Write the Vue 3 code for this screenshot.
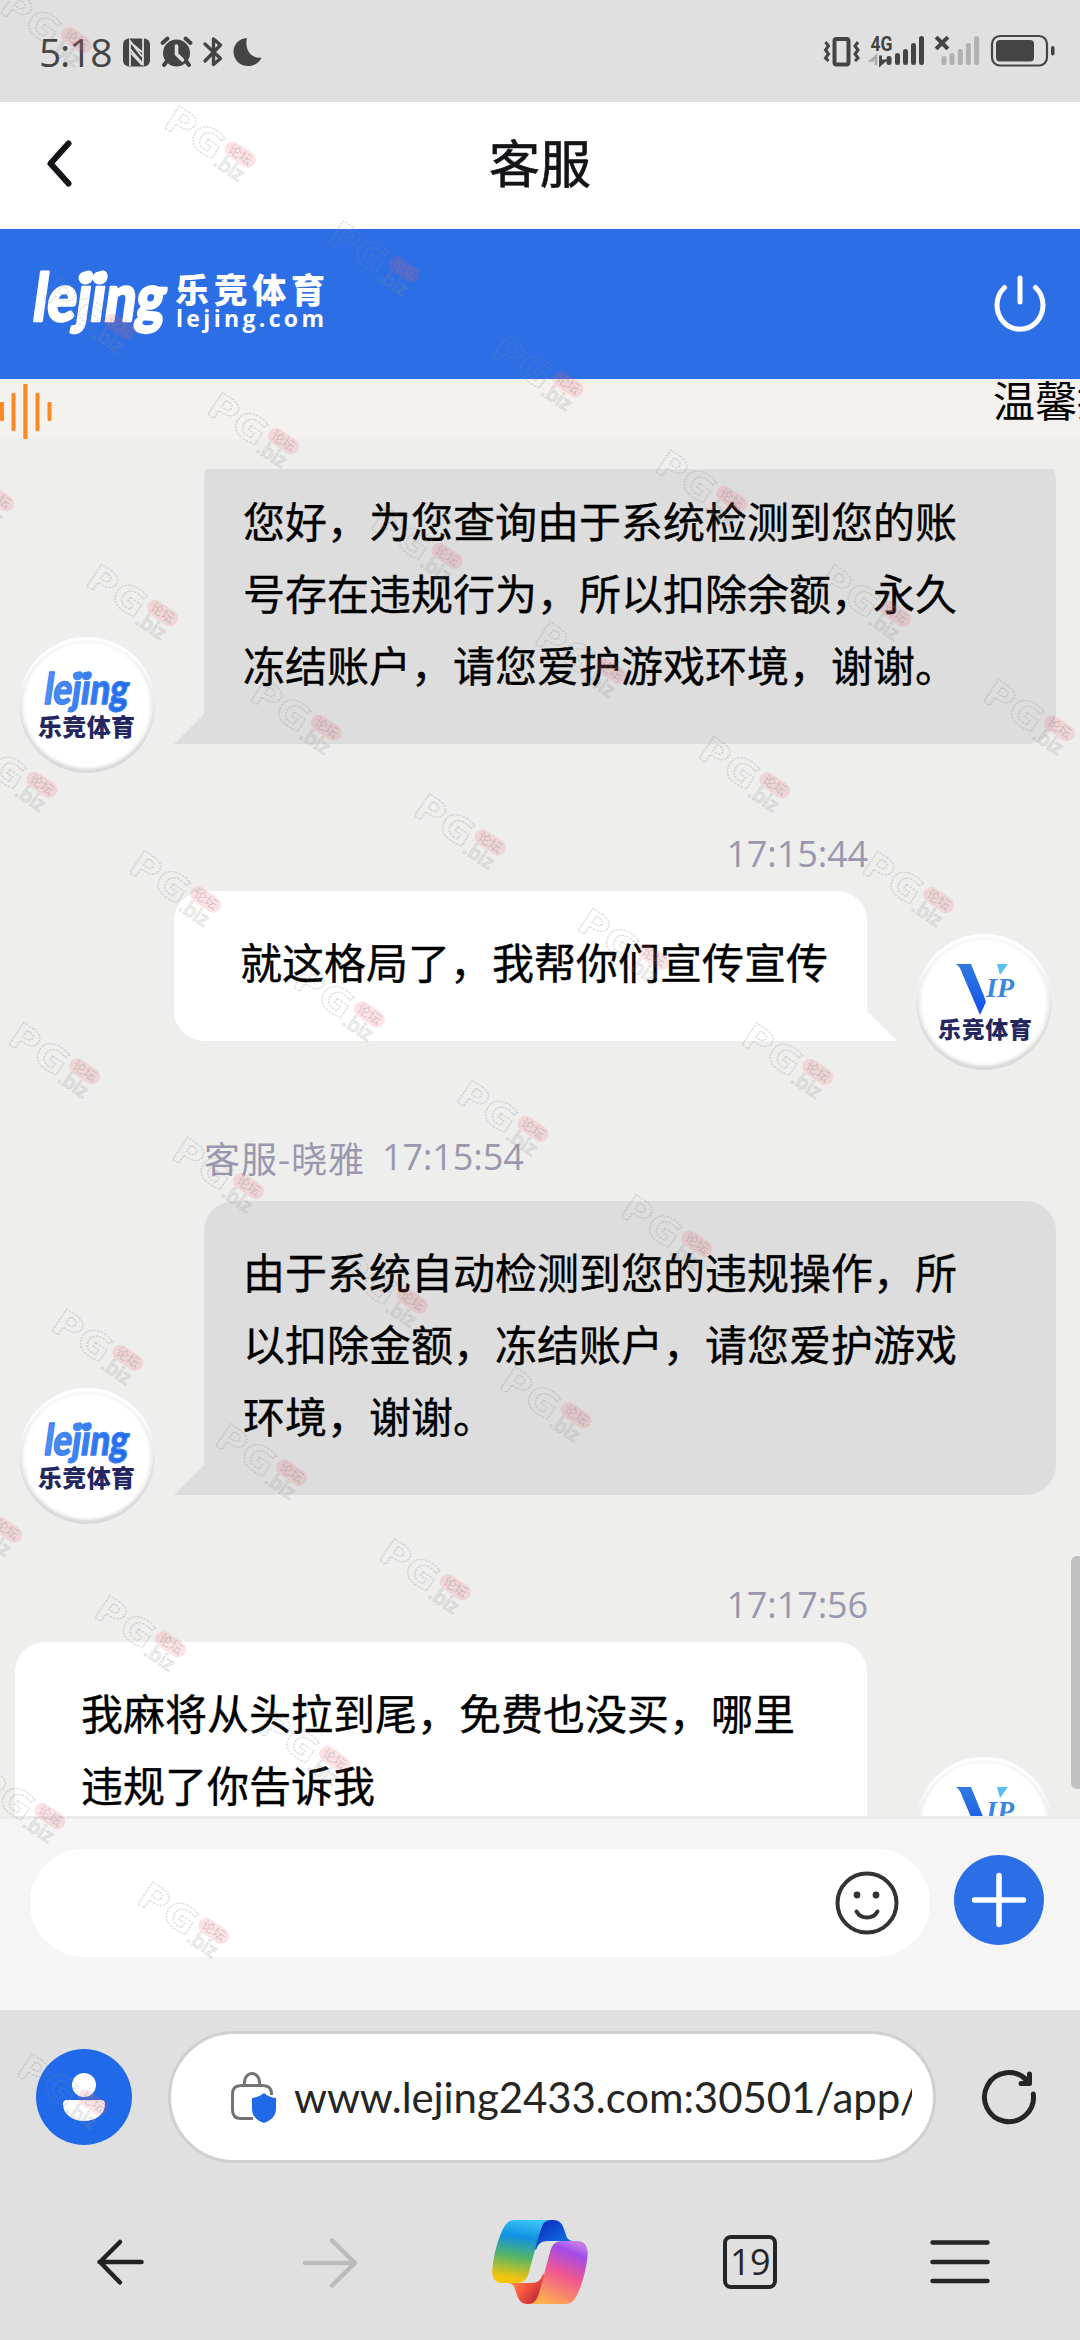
<script setup>
const ranges = [[-1, 5], [-1, 4], [-2, 3], [-2, 2], [-2, 1], [-2, 0], [-3, -1], [-3, -2], [-3, -3]]
const marks = ranges.flatMap(([from, to], row) =>
  Array.from({ length: to - from + 1 }, (_, i) => ({
    x: 161 + row * 43 + (from + i) * 163.8,
    y: 104 + row * 286.5 + (from + i) * 114.7
  }))
)
const messages = [
  { side: 'agent', meta: '', lines: ['您好，为您查询由于系统检测到您的账', '号存在违规行为，所以扣除余额，永久', '冻结账户，请您爱护游戏环境，谢谢。'] },
  { side: 'user', meta: '', time: '17:15:44', lines: ['就这格局了，我帮你们宣传宣传'] },
  { side: 'agent', meta: '客服-晓雅', time: '17:15:54', lines: ['由于系统自动检测到您的违规操作，所', '以扣除金额，冻结账户，请您爱护游戏', '环境，谢谢。'] },
  { side: 'user', meta: '', time: '17:17:56', lines: ['我麻将从头拉到尾，免费也没买，哪里', '违规了你告诉我'] }
]
const strong = [[889, 56], [897.5, 53], [905.5, 49], [913.5, 43], [921.5, 36]]
const weak = [[944, 56], [952, 53], [960.3, 49], [968.4, 43], [976.6, 36]]
</script>

<template>
  <div class="screen">
    <header class="status">
      <span class="clock">5:18</span>
      <svg class="status-left" width="142" height="34" viewBox="121 34 142 34">
        <rect x="123" y="38.500" width="27" height="28" rx="6" fill="#444" />
        <path d="M130 66V41l12 15.500M143 38v26l-13-15M131 53l11 12M131 43l11 9" fill="none" stroke="#e0e0e0" stroke-width="1.800" />
        <circle cx="176.500" cy="53" r="13.500" fill="#444" />
        <path d="M162.500 43l5-4.500M190.500 43l-5-4.500M167 61l-3 4M186 61l3 4" stroke="#444" stroke-width="4" stroke-linecap="round" />
        <path d="M176.500 46v8l6 6" fill="none" stroke="#e0e0e0" stroke-width="3.600" stroke-linecap="round" />
        <path d="M205 44l15.500 14.500-7 6V39l7 6L205 61" fill="none" stroke="#444" stroke-width="3.400" stroke-linejoin="round" stroke-linecap="round" />
        <path d="M247 38c-8 .5-13.500 6.500-13.500 13.500C233.500 60 240 66 248 66c7 0 12-4 13.500-8.500-9 1.500-17.500-6.500-14.500-19.500z" fill="#444" />
      </svg>
      <svg class="status-right" width="238" height="36" viewBox="820 33 238 36">
        <rect x="834.500" y="39" width="14" height="25.500" rx="2" fill="none" stroke="#444" stroke-width="4" />
        <path d="M825.500 42l3 4-3 4 3 4-3 4 3 3M858 42l-3 4 3 4-3 4 3 4-3 3" fill="none" stroke="#444" stroke-width="3" />
        <text x="870.500" y="50.500" class="net" textLength="22" lengthAdjust="spacingAndGlyphs">4G</text>
        <path d="M876 65V56l-5 4.500h3" fill="none" stroke="#aaa" stroke-width="2.500" />
        <path d="M880.500 55.500v9l4-3.500h-3" fill="none" stroke="#444" stroke-width="2.800" />
        <rect v-for="b in strong" :key="b[0]" :x="b[0] - 2.5" :y="b[1]" width="5" :height="65 - b[1]" rx="2.300" fill="#444" />
        <rect v-for="b in weak" :key="b[0]" :x="b[0] - 2.5" :y="b[1]" width="5" :height="65 - b[1]" rx="2.300" fill="#b1b1b1" />
        <path d="M937.500 38.500l9 9M946.500 38.500l-9 9" stroke="#444" stroke-width="4" stroke-linecap="square" />
        <rect x="992" y="36" width="55" height="29.500" rx="8" fill="none" stroke="#444" stroke-width="2.200" />
        <rect x="996" y="40" width="38" height="21.500" rx="4" fill="#444" />
        <rect x="1051" y="46" width="3.500" height="9.500" rx="1.700" fill="#444" />
      </svg>
    </header>

    <div class="titlebar">
      <svg class="back" width="30" height="50" viewBox="0 0 30 50"><path d="M23.500 4.500L5.500 24.500l18 20" fill="none" stroke="#131418" stroke-width="6" stroke-linecap="round" stroke-linejoin="round" /></svg>
      <h1>客服</h1>
    </div>

    <div class="brand">
      <svg width="300" height="80" viewBox="30 264 300 80" fill="#fff">
        <g transform="translate(31 321) skewX(-8)"><text class="script logo-script" x="0" y="0" font-size="66" textLength="132" lengthAdjust="spacingAndGlyphs">lejing</text></g>
        <circle cx="85" cy="278" r="6.500" /><circle cx="99" cy="278" r="6.500" />
        <text class="heavy" x="175" y="303" font-size="34" textLength="150" lengthAdjust="spacing">乐竞体育</text>
        <text class="domain" x="176" y="327" font-size="23" textLength="148">lejing.com</text>
      </svg>
      <svg width="56" height="60" viewBox="992 276 56 60" fill="none" stroke="#fff" stroke-width="5" stroke-linecap="round">
        <path d="M1004.500 289.500A23 24 0 1 0 1035.500 289.500M1020 280v24" />
      </svg>
    </div>

    <div class="notice">
      <svg width="54" height="60" viewBox="0 0 54 60" fill="#fb8a26">
        <rect x="-1" y="23" width="5" height="19" rx="1" /><rect x="11.500" y="14" width="4" height="38" rx="1" /><rect x="23.300" y="5" width="4.200" height="55" /><rect x="35.500" y="14" width="4" height="38" rx="1" /><rect x="47.500" y="23" width="4" height="19" rx="1" />
      </svg>
      <span>温馨提示</span>
    </div>

    <main class="chat">
      <div class="viewport">
        <section v-for="(m, i) in messages" :key="i" :class="['message', m.side]">
          <div v-if="m.time" class="meta"><span v-if="m.meta">{{ m.meta }}</span><time>{{ m.time }}</time></div>
          <div class="row">
            <div class="avatar">
              <svg v-if="m.side === 'agent'" width="136" height="136" viewBox="0 0 136 136">
                <defs><linearGradient id="lj" x1="0" x2="1"><stop offset="0" stop-color="#5191f5" /><stop offset="1" stop-color="#1d68ea" /></linearGradient></defs>
                <g transform="translate(24 67) skewX(-8)"><text class="script small-script" x="0" y="0" font-size="43" textLength="84" lengthAdjust="spacingAndGlyphs" fill="url(#lj)">lejing</text></g>
                <circle cx="58" cy="39" r="4.200" fill="#4387f3" /><circle cx="67" cy="39" r="4.200" fill="#3a80f1" />
                <text class="heavy" x="19" y="98.500" font-size="24" textLength="97" fill="#23265f">乐竞体育</text>
              </svg>
              <svg v-else width="136" height="136" viewBox="0 0 136 136">
                <defs><linearGradient id="vp" y1="0" y2="1" x2="0"><stop offset="0" stop-color="#2f7bdf" /><stop offset="1" stop-color="#1550ee" /></linearGradient></defs>
                <path d="M40 30h15l13 32 2 6-6 13-18-42c-1-4-3-7-6-9z" fill="url(#vp)" />
                <path d="M81 30h11l-8 11z" fill="#5bbcf0" />
                <text class="vip" x="70" y="63" font-size="27" textLength="28" lengthAdjust="spacingAndGlyphs" fill="#3a86dc">IP</text>
                <text class="heavy" x="22" y="103.500" font-size="23" textLength="94" fill="#23265f">乐竞体育</text>
              </svg>
            </div>
            <div :class="['bubble', { full: m.lines.length > 1 }]">
              <p v-for="line in m.lines" :key="line">{{ line }}</p>
            </div>
          </div>
        </section>
      </div>
      <i class="scrollbar"></i>
    </main>

    <div class="composer">
      <div class="field">
        <svg width="64" height="64" viewBox="-32 -32 64 64" fill="none" stroke="#333" stroke-linecap="round">
          <circle r="29.500" stroke-width="4" /><path d="M-10.500 8.500C-6 16.500 6 16.500 10.500 8.500" stroke-width="4" />
          <g fill="#333" stroke="none"><circle cx="-10" cy="-8" r="3.400" /><circle cx="9" cy="-8" r="3.400" /></g>
        </svg>
      </div>
      <svg width="90" height="90" viewBox="-45 -45 90 90"><circle r="45" fill="#2b6ee6" /><path d="M-24.500 0h49M0-24.500v49" stroke="#fff" stroke-width="5.500" stroke-linecap="round" /></svg>
    </div>

    <footer class="browser">
      <div class="address-row">
        <svg width="96" height="96" viewBox="36 2049 96 96"><circle cx="84" cy="2097" r="48" fill="#206aea" /><circle cx="84" cy="2085" r="12" fill="#fff" /><path d="M67 2100h34q4 0 4 4c0 10-9 17-21 17s-21-7-21-17q0-4 4-4z" fill="#fff" /></svg>
        <div class="address">
          <svg width="50" height="56" viewBox="229 2070 50 56">
            <path d="M253 2119.500h-12q-8.500 0-8.500-8.500v-16q0-8.500 8.500-8.500h22q8.500 0 8.500 8.500v1M244.500 2086v-3a7.500 8.500 0 0 1 15 0v3" fill="none" stroke="#737373" stroke-width="3" />
            <path d="M264 2094q5 4.500 12 5v11c0 7-5 11.500-12 14-7-2.500-12-7-12-14v-11q7-.5 12-5z" fill="#206aea" />
          </svg>
          <span class="url">www.lejing2433.com:30501/app/</span>
        </div>
        <svg class="refresh" width="60" height="60" viewBox="-30 -30 60 60" fill="none" stroke="#252525" stroke-width="5" stroke-linecap="round" stroke-linejoin="round"><path d="M24.300-3A24.500 24.500 0 1 1 18-16.500M20.500-23v9.500H12" /></svg>
      </div>
      <nav>
        <svg width="54" height="54" viewBox="-27 -27 54 54" fill="none" stroke="#222" stroke-width="4.500" stroke-linecap="round" stroke-linejoin="round"><path d="M20.500 0h-42M-1-20L-21 0-1 20.500" /></svg>
        <svg width="60" height="54" viewBox="-30 -27 60 54" fill="none" stroke="#bbb" stroke-width="4.500" stroke-linecap="round" stroke-linejoin="round"><path d="M-25 1h50M2-21.500L25 1 2 23.500" /></svg>
        <svg width="96" height="84" viewBox="0 0 96 84">
          <defs>
            <linearGradient id="c1" x1=".6" y1="0" x2=".45" y2="1"><stop offset="0" stop-color="#38c4f8" /><stop offset=".28" stop-color="#1190e0" /><stop offset=".6" stop-color="#57b567" /><stop offset=".95" stop-color="#f5c50a" /></linearGradient>
            <linearGradient id="c2" x1=".7" y1="0" x2=".3" y2="1"><stop offset="0" stop-color="#c07be8" /><stop offset=".14" stop-color="#a24bea" /><stop offset=".5" stop-color="#f0578f" /><stop offset="1" stop-color="#ffb04d" /></linearGradient>
            <linearGradient id="c3" x1=".2" y1=".2" x2="1" y2="1"><stop offset="0" stop-color="#0a36c5" /><stop offset="1" stop-color="#1386e8" /></linearGradient>
            <linearGradient id="c4" x1=".1" y1="0" x2=".9" y2=".5"><stop offset="0" stop-color="#ff9a50" /><stop offset=".55" stop-color="#fa5a3e" /><stop offset="1" stop-color="#c93238" /></linearGradient>
          </defs>
          <path d="M52 0h9c6 0 9 3 11 9l2 6c1 4 4 6 8 6H56c-7 0-10 3-12 9l-2-2z" fill="url(#c3)" />
          <path d="M48 84H36c-6 0-9-3-11-9l-2-6c-1-4-4-6-8-6h24c7 0 10-3 12-9l4 2z" fill="url(#c4)" />
          <path d="M23 0h36c-6 0-9 4-11 11L37 52c-2 8-6 11-13 11H11C3 63-1 58 .5 48 2 33 6 19 11 9 14 3 17 0 23 0z" fill="url(#c1)" />
          <path d="M73 84H36c6 0 9-4 11-11l11-41c2-8 6-11 13-11h13c9 0 12.500 5 11.500 15C94 51 90 65 85 75c-3 6-6 9-12 9z" fill="url(#c2)" />
        </svg>
        <span class="tabs">19</span>
        <svg width="60" height="48" viewBox="0 0 60 48" stroke="#252525" stroke-width="4.500" stroke-linecap="round"><path d="M2.500 4.500h55M2.500 24h55M2.500 43h55" /></svg>
      </nav>
    </footer>

    <svg class="watermarks" width="1080" height="2340" viewBox="0 0 1080 2340">
      <defs>
        <g id="mark">
          <g transform="translate(1 22) rotate(34)">
            <text class="wm-big" x="-1" y="0" font-size="37" textLength="64" lengthAdjust="spacingAndGlyphs">PG</text>
            <text class="wm-small" x="63" y="4" font-size="20" textLength="32">.biz</text>
            <rect x="64" y="-28" width="34" height="16" rx="8" fill="#f55a64" fill-opacity=".17" />
            <text class="wm-cn" x="68" y="-15.500" font-size="13">论坛</text>
          </g>
        </g>
      </defs>
      <use v-for="(m, i) in marks" :key="i" href="#mark" :x="m.x" :y="m.y" />
    </svg>
  </div>
</template>

<style>
body { margin: 0; overflow: hidden; }
</style>

<style scoped>
.screen { position: relative; width: 1080px; height: 2340px; overflow: hidden; display: flex; flex-direction: column; background: #eeeeec; font-family: "Noto Sans CJK SC", sans-serif; }
svg { display: block; flex: none; }
.status { height: 102px; flex: none; background: #e0e0e0; display: flex; align-items: center; padding: 0 22px 0 39px; box-sizing: border-box; }
.clock { font: 500 39px/40px "Open Sans", sans-serif; color: #444; letter-spacing: -1.2px; width: 82px; margin-top: 1px; white-space: nowrap; }
.status-right { margin-left: auto; }
.net { font: 700 20px "Roboto", sans-serif; fill: #444; }
.titlebar { height: 127px; flex: none; background: #fff; display: flex; align-items: center; padding-left: 45px; box-sizing: border-box; }
.back { margin-top: -3px; }
.titlebar h1 { margin: -9px 0 0; width: 930px; text-align: center; font-size: 51px; line-height: 80px; font-weight: 400; -webkit-text-stroke: .7px #131418; color: #131418; }
.brand { height: 150px; flex: none; background: #2b6ee6; display: flex; align-items: center; justify-content: space-between; padding: 0 32px 0 30px; box-sizing: border-box; }
.script { font-family: "Lato", sans-serif; font-weight: 900; }
.logo-script { stroke: #fff; stroke-width: 2.6px; stroke-linejoin: round; }
.small-script { stroke: #3a80f1; stroke-width: 1.4px; stroke-linejoin: round; }
.heavy { font-family: "Noto Sans CJK SC", sans-serif; font-weight: 900; }
.domain { font-family: "Open Sans", sans-serif; font-weight: 700; }
.vip { font-family: "Liberation Serif", serif; font-style: italic; font-weight: 700; }
.notice { height: 60px; flex: none; background: #f4f1ee; display: flex; justify-content: space-between; overflow: hidden; }
.notice span { width: 87px; font-size: 42px; line-height: 40px; white-space: nowrap; color: #000; }
.chat { position: relative; height: 1347px; flex: none; padding-top: 30px; }
.viewport { height: 1347px; overflow: hidden; }
.message:first-child { margin-top: -19px; }
.message { display: flex; flex-direction: column; }
.row { display: flex; align-items: flex-end; gap: 49px; }
.agent .row { padding-left: 19px; }
.user .row { flex-direction: row-reverse; padding-right: 28px; }
.avatar { width: 136px; height: 136px; border-radius: 50%; margin-bottom: -29px; background: #fff; flex: none; box-shadow: inset 0 -4px 3px #d9d9d9, inset 0 4px 2px #fff, inset 0 0 4px 4px #e8e8e8; }
.meta { color: #9a98af; display: flex; font-size: 36px; gap: 17px; box-sizing: border-box; }
.meta span { letter-spacing: .9px; }
.meta time { font-family: "Open Sans", sans-serif; letter-spacing: -.1px; }
.user .meta { height: 147px; padding: 85px 212px 0 0; justify-content: flex-end; line-height: 50px; }
.agent .meta { height: 160px; padding: 91px 0 0 204px; line-height: 50px; }
.bubble { box-sizing: border-box; border-radius: 30px; padding: 34px 39px 44px; font-size: 42px; line-height: 72px; color: #000; font-weight: 400; -webkit-text-stroke: .35px #000; position: relative; }
.bubble p { margin: 0; white-space: nowrap; }
.bubble.full { width: 852px; }
.agent .bubble { background: #ddd; border-bottom-left-radius: 0; }
.user .bubble { background: #fff; padding-left: 66px; border-bottom-right-radius: 0; }
.bubble::after { content: ""; position: absolute; bottom: 0; width: 30px; height: 30px; }
.agent .bubble::after { right: 100%; background: #ddd; clip-path: polygon(100% 0, 100% 100%, 0 100%); }
.user .bubble::after { left: 100%; background: #fff; clip-path: polygon(0 0, 100% 100%, 0 100%); }
.scrollbar { position: absolute; right: 0; top: 1117px; width: 9px; height: 233px; border-radius: 6px 0 0 6px; background: #c1c1c1; }
.composer { height: 194px; flex: none; box-sizing: border-box; border-top: 3px solid #ebebeb; background: #f5f5f6; display: flex; align-items: flex-start; gap: 24px; padding: 30px 0 0 30px; }
.composer > svg { margin-top: 6px; }
.field { width: 900px; height: 108px; border-radius: 54px; background: #fff; display: flex; align-items: center; justify-content: flex-end; padding-right: 31px; box-sizing: border-box; }
.browser { flex: 1; background: #e0e0e0; padding-top: 21px; }
.address-row { display: flex; align-items: center; padding-left: 36px; }
.address { width: 768px; height: 132px; margin-left: 36px; border: 3px solid #d0d0d0; border-radius: 66px; background: #fff; box-sizing: border-box; display: flex; align-items: center; padding-left: 58px; }
.url { margin-left: 15px; width: 618px; overflow: hidden; white-space: nowrap; font: 400 42px/60px "Lato", sans-serif; letter-spacing: -.08px; color: #252525; }
.refresh { margin-left: 43px; }
nav { display: flex; align-items: center; margin-top: 57px; height: 84px; padding-left: 94px; }
nav > :nth-child(2) { margin-left: 152px; }
nav > :nth-child(3) { margin-left: 132px; }
.tabs { margin-left: 135px; width: 54px; height: 54px; box-sizing: border-box; border: 4.500px solid #252525; border-radius: 8px; font: 400 36px/45px "Open Sans", sans-serif; letter-spacing: -.6px; text-align: center; color: #252525; }
nav > :nth-child(5) { margin-left: 153px; }
.watermarks { position: absolute; inset: 0; pointer-events: none; }
.wm-big { font-family: "Open Sans", sans-serif; font-weight: 700; fill: none; stroke: #888; stroke-opacity: .3; stroke-width: 1.200; stroke-dasharray: 2 1; }
.wm-small { font-family: "Open Sans", sans-serif; font-weight: 600; fill: #999; fill-opacity: .12; stroke: #888; stroke-opacity: .25; stroke-width: .8; }
.wm-cn { font-family: "Noto Sans CJK SC", sans-serif; fill: #888; fill-opacity: .35; }
</style>
